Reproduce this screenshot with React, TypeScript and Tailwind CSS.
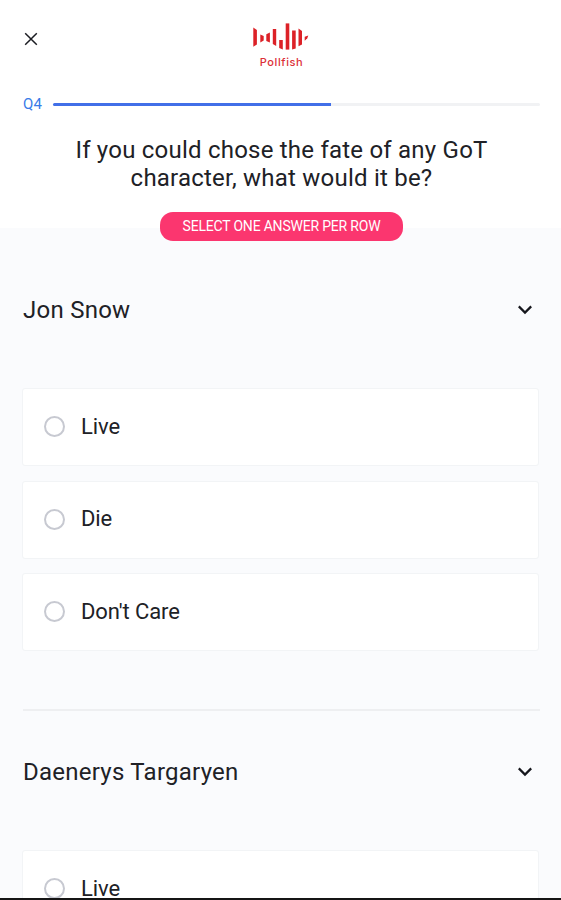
const logoBars = [
  'M253.8 27.5 L257.4 30 V44.5 L253.8 46.8 Z',
  'M260.8 34.6 L264.2 36 V40.5 L260.8 42.6 Z',
  'M266.8 34.2 L270.4 32.6 V42.6 L266.8 41 Z',
  'M273.3 29 H276.7 V46 L273.3 44 Z',
  'M279.7 40 H283.3 V49.5 L279.7 48 Z',
  'M286.2 23.4 H289.8 V49.6 H286.2 Z',
  'M292.6 30.6 H296.2 V48.6 L292.6 49.6 Z',
  'M299 28.6 L302.5 31 V44.6 L299 46.2 Z',
  'M305.2 36.8 L308.8 35.6 L307.8 38.2 L305.2 40.8 Z',
]

const sections = [
  { name: 'Jon Snow', answers: ['Live', 'Die', "Don't Care"] },
  { name: 'Daenerys Targaryen', answers: ['Live'] },
]

function CloseIcon() {
  return (
    <svg width="14" height="14" viewBox="0 0 14 14" fill="none" stroke="#1b1c22" strokeWidth="1.5">
      <path d="M1.2 1.2 L12.8 12.8 M12.8 1.2 L1.2 12.8" />
    </svg>
  )
}

function ChevronIcon() {
  return (
    <svg width="16" height="12" viewBox="0 0 16 12" fill="none" stroke="#15161c" strokeWidth="2.2">
      <path d="M1.8 2.4 L8 8.6 L14.2 2.4" />
    </svg>
  )
}

function Logo() {
  return (
    <div className="flex flex-col items-center">
      <svg width="57" height="28" viewBox="253.5 23 57 28" fill="#dc2127">
        {logoBars.map((d) => (
          <path key={d} d={d} />
        ))}
      </svg>
      <span className="mt-[3px] font-['Inter',sans-serif] text-[11px] font-medium leading-4 tracking-[0.6px] text-[#dc2f38]">
        Pollfish
      </span>
    </div>
  )
}

function Answer({ label }: { label: string }) {
  return (
    <label className="flex h-[78px] items-center rounded-[3px] border border-[#f2f4f6] bg-white pb-px pl-[21px]">
      <span className="size-[21px] rounded-full border-2 border-[#c7c9d1]" />
      <span className="ml-4 text-[22px] leading-7 tracking-[-0.1px] text-[#202126]">{label}</span>
    </label>
  )
}

function Section({ name, answers }: { name: string; answers: string[] }) {
  return (
    <section>
      <div className="flex h-8 items-center justify-between pr-[7px]">
        <h2 className="text-2xl tracking-[0.25px]">{name}</h2>
        <ChevronIcon />
      </div>
      <div className="mt-[62px] mr-px -ml-px flex flex-col gap-[14.5px]">
        {answers.map((answer) => (
          <Answer key={answer} label={answer} />
        ))}
      </div>
    </section>
  )
}

export default function App() {
  return (
    <div className="flex h-[900px] w-[561px] flex-col overflow-hidden border-b-2 border-[#151515] bg-[#fafbfd] font-['Roboto',sans-serif] text-[#202126]">
      <header className="flex h-[228px] shrink-0 flex-col bg-white pr-[21px] pl-[23px]">
        <div className="grid h-[72px] shrink-0 grid-cols-[57px_1fr_57px] pt-[23px]">
          <button className="mt-[9px] ml-px size-[14px]">
            <CloseIcon />
          </button>
          <Logo />
        </div>
        <div className="mt-[22px] flex h-5 shrink-0 items-center">
          <span className="w-[30px] text-[15px] tracking-[0.2px] text-[#397be8]">Q4</span>
          <div className="h-[3px] flex-1 rounded-full bg-[#f1f2f4]">
            <div className="h-full w-[278px] rounded-l-full bg-[#416fe8]" />
          </div>
        </div>
        <h1 className="mt-[22px] shrink-0 text-center text-2xl leading-7 tracking-[0.22px]">
          If you could chose the fate of any GoT
          <br />
          character, what would it be?
        </h1>
        <div className="mt-5 flex h-[29px] w-[243px] shrink-0 items-center justify-center self-center rounded-[13px] bg-[#fb366f] pb-[2px] text-sm tracking-[-0.2px] text-white">
          SELECT ONE ANSWER PER ROW
        </div>
      </header>
      <main className="pt-[66px] pr-[21px] pl-[23px]">
        <Section {...sections[0]} />
        <hr className="mt-[58px] mb-[45px] border-t-2 border-[#eeeff1]" />
        <Section {...sections[1]} />
      </main>
    </div>
  )
}
